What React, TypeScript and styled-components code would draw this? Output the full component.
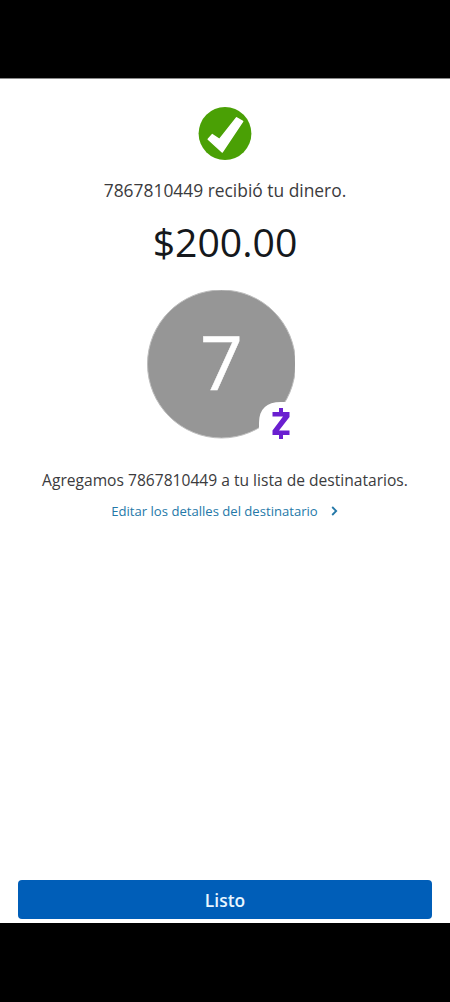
import React from 'react';
import styled, { createGlobalStyle } from 'styled-components';

const GlobalStyle = createGlobalStyle`
  * { box-sizing: border-box; }
  body { margin: 0; background: #000; font-family: "Open Sans", "Noto Sans", sans-serif; }
`;

const Screen = styled.div`
  display: flex;
  flex-direction: column;
  height: 1002px;
  padding: 78px 0 79px;
  background: #000;
`;

const Sheet = styled.main`
  flex: 1;
  display: flex;
  flex-direction: column;
  align-items: center;
  padding: 28px 18px 4px;
  background: #fff;
  border-top: 1px solid #8a8a8a;
`;

const SuccessIcon = styled.svg`
  display: block;
  flex: none;
  width: 54px;
  height: 54px;
`;

const Message = styled.p<{ $top: number; $size: number; $spacing?: number }>`
  margin: ${({ $top }) => $top}px 0 0;
  font-size: ${({ $size }) => $size}px;
  line-height: 24px;
  letter-spacing: ${({ $spacing = 0 }) => $spacing}px;
  color: #3b3b3d;
  white-space: nowrap;
`;

const Amount = styled.h1`
  margin: 15px 0 0;
  font-size: 39.2px;
  line-height: 50px;
  font-weight: 400;
  color: #15181c;
`;

const Avatar = styled.div`
  position: relative;
  display: flex;
  align-items: center;
  justify-content: center;
  flex: none;
  width: 148px;
  height: 148px;
  margin: 23px 8px 0 0;
`;

const AvatarArt = styled.svg`
  position: absolute;
  inset: 0;
  width: 148px;
  height: 150px;
`;

const Initial = styled.span`
  position: relative;
  padding: 0 0 6px 1px;
  font-size: 75px;
  line-height: 100px;
  color: #fff;
  -webkit-text-stroke: 0.5px #fff;
`;

const EditLink = styled.a`
  display: flex;
  align-items: center;
  gap: 13px;
  margin: 10px 1px 0 0;
  font-size: 13.1px;
  line-height: 18px;
  color: #2478a8;
  white-space: nowrap;
`;

const DoneButton = styled.button`
  width: 100%;
  height: 39px;
  margin-top: auto;
  padding: 0;
  border: 0;
  border-radius: 4px;
  background: #005eb8;
  color: #e9f6ff;
  font: 600 17.4px/40px "Open Sans", "Noto Sans", sans-serif;
`;

export default function App() {
  return (
    <Screen>
      <GlobalStyle />
      <Sheet>
        <SuccessIcon viewBox="0 0 54 54">
          <circle cx="27" cy="26.5" r="26.4" fill="#4aa005" />
          <path
            d="M10.2 32.2L14.2 27.6L21.4 32.4L38.6 10.8L44.7 14.4L24.2 45Z"
            fill="#fff"
            stroke="#fff"
            strokeWidth="1.4"
            strokeLinejoin="round"
          />
        </SuccessIcon>
        <Message $top={17} $size={17.4}>7867810449 recibió tu dinero.</Message>
        <Amount>$200.00</Amount>
        <Avatar>
          <AvatarArt viewBox="0 0 148 150">
            <circle cx="74.5" cy="74" r="74" fill="#969696" stroke="#bdbdbd" strokeWidth="1" />
            <path d="M112 150V133Q112 112 134 112H148V150Z" fill="#fff" />
            <path
              d="M125.5 122H142.5V127L132 140.5H142.5V145H125.5V140.5L136 126.5H125.5ZM132 118H136V123H132ZM132 145H136V149H132Z"
              fill="#6a1fd0"
            />
          </AvatarArt>
          <Initial>7</Initial>
        </Avatar>
        <Message $top={30} $size={15.6}>Agregamos 7867810449 a tu lista de destinatarios.</Message>
        <EditLink>
          Editar los detalles del destinatario
          <svg width="7" height="10" viewBox="0 0 7 10" fill="none">
            <path d="M1.2 1L5.2 5L1.2 9" stroke="#2478a8" strokeWidth="1.8" />
          </svg>
        </EditLink>
        <DoneButton>Listo</DoneButton>
      </Sheet>
    </Screen>
  );
}
